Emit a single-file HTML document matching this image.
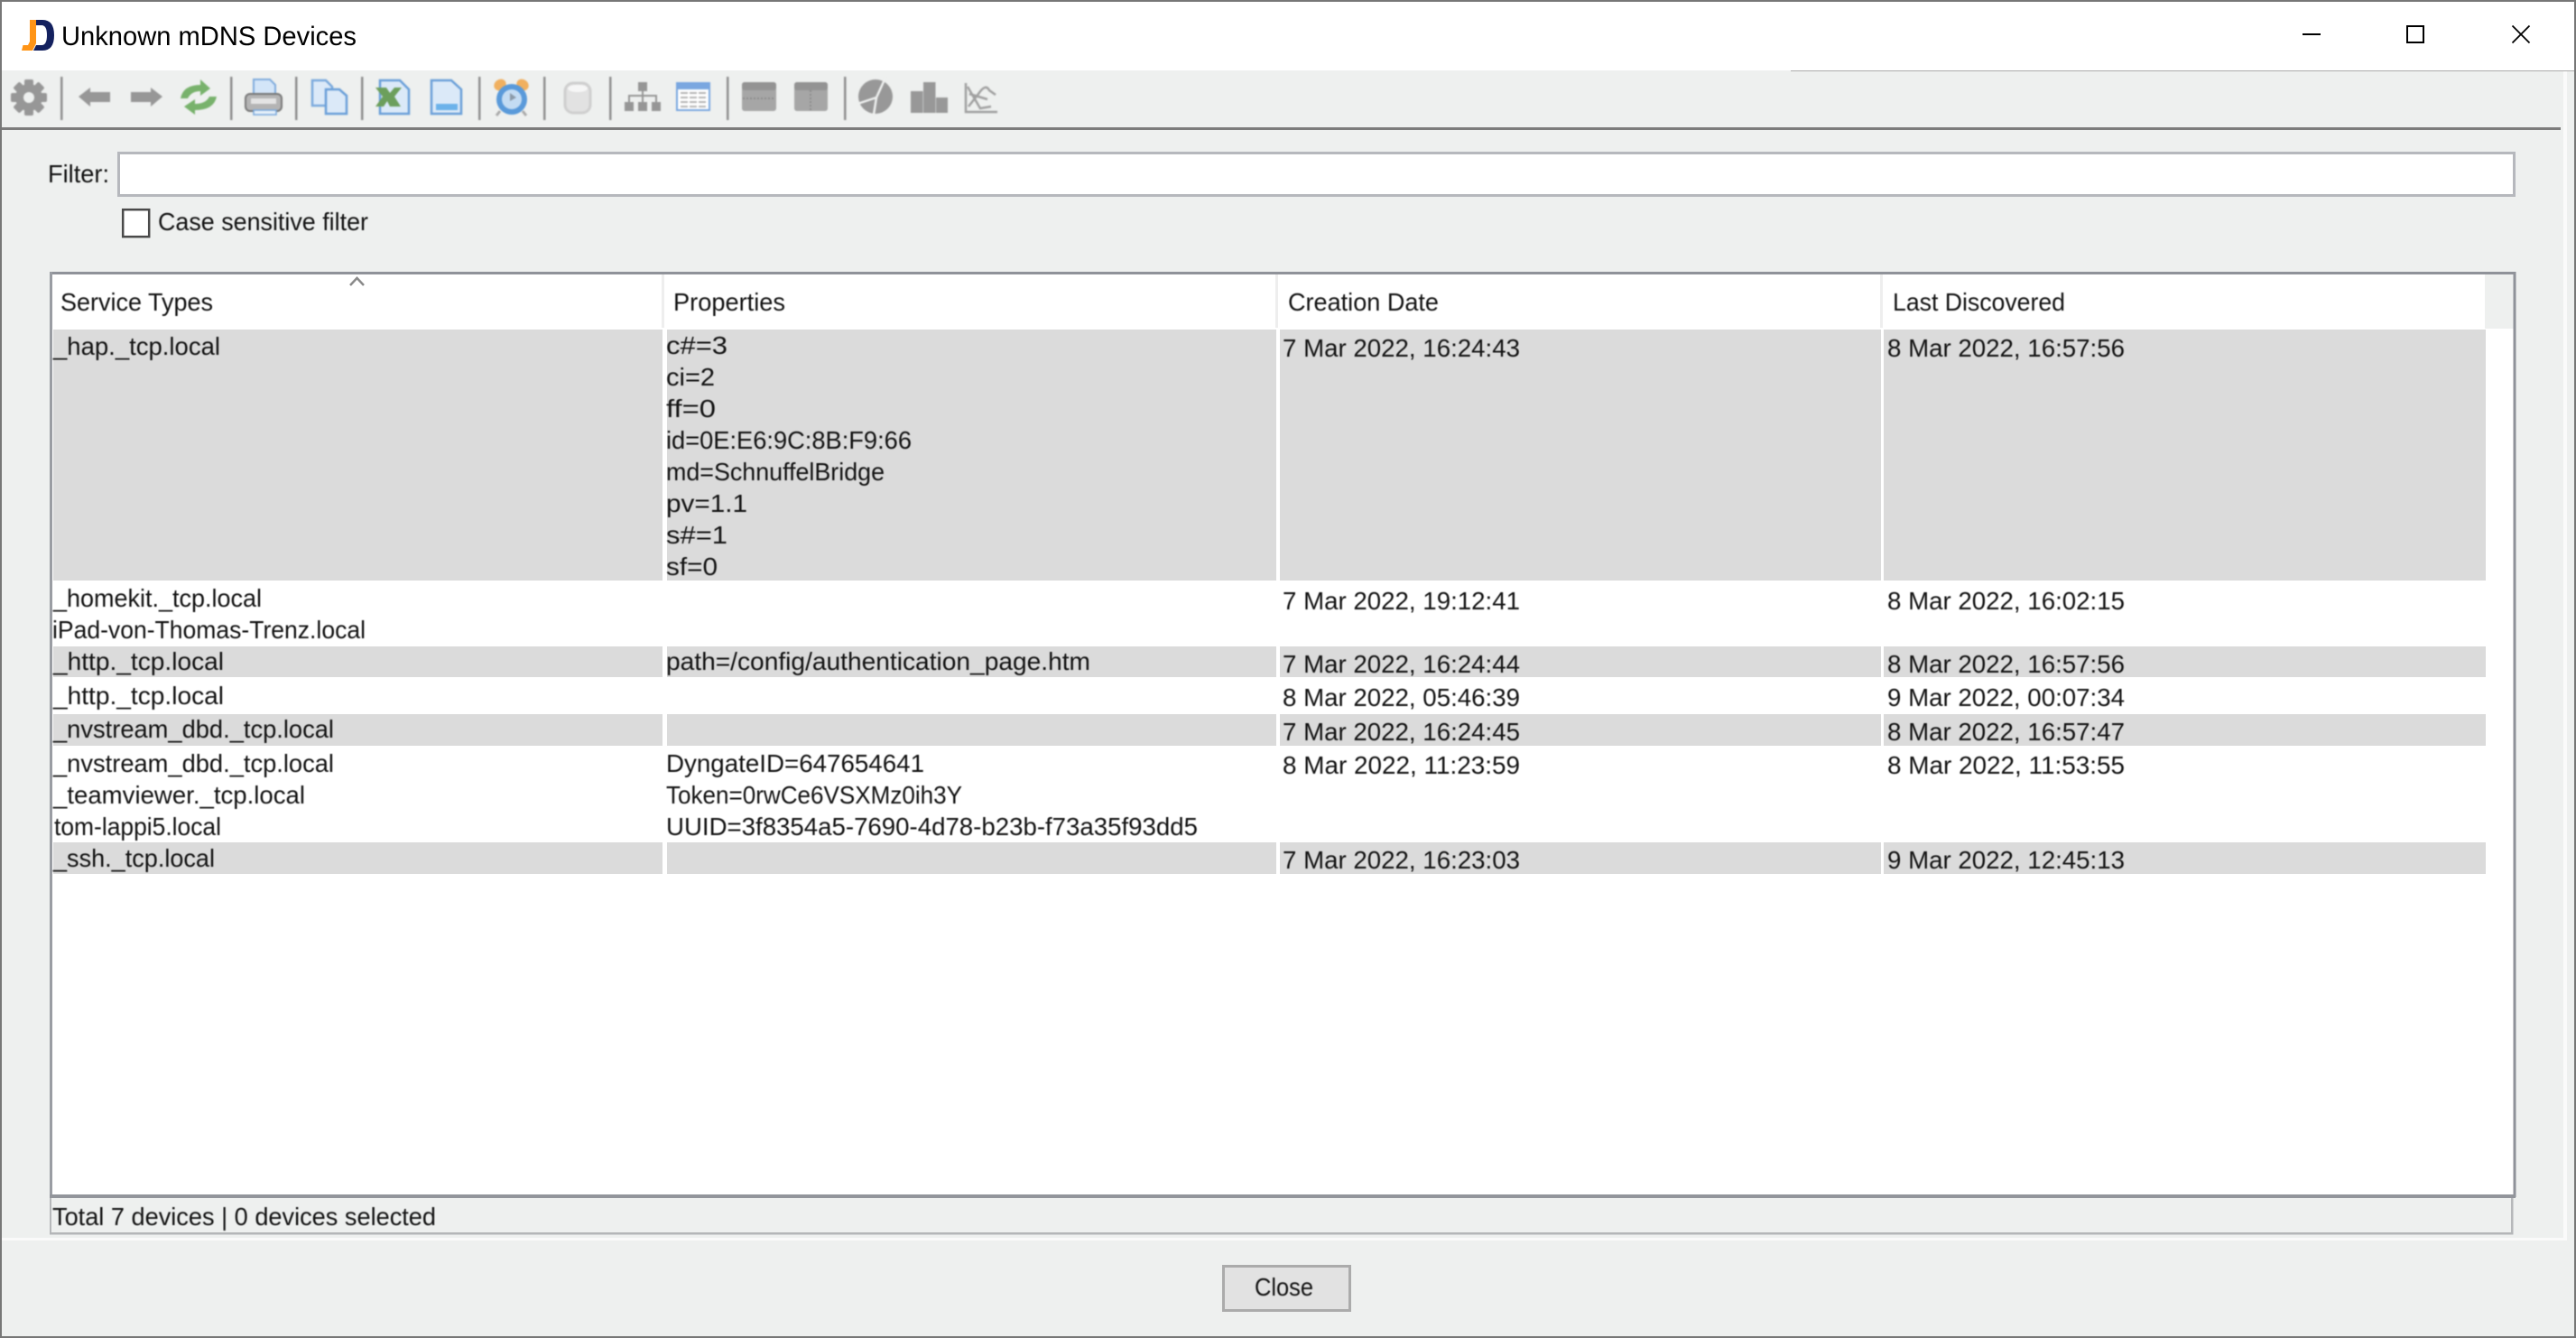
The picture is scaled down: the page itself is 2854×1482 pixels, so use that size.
<!DOCTYPE html>
<html><head><meta charset="utf-8"><title>Unknown mDNS Devices</title>
<style>
html,body{margin:0;padding:0;background:#eef0ef;width:2854px;height:1482px;overflow:hidden}
svg{display:block;position:absolute;left:0;top:0}
text{font-family:"Liberation Sans",sans-serif;font-size:27.5px;fill:#141414}
.soft{filter:blur(.6px)}
.ic{filter:blur(.9px)}
</style></head><body>
<svg width="2854" height="1482" viewBox="0 0 2854 1482" xmlns="http://www.w3.org/2000/svg">
<rect width="2854" height="1482" fill="#eef0ef"/>
<!-- title bar -->
<rect x="0" y="0" width="2854" height="78" fill="#fff"/>
<rect x="1984" y="78" width="870" height="1" fill="#ababab"/>
<path d="M33 22H40V48L36 56H24L25.500 50H31L33 46Z" fill="#ff9416"/>
<path d="M40 22H47Q60 22 60 39Q60 56 47 56H37L40 50H46Q52 50 52 39Q52 28 46 28H40Z" fill="#14215f"/>
<text x="68" y="50" style="font-size:29.5px;fill:#000" textLength="327" lengthAdjust="spacingAndGlyphs">Unknown mDNS Devices</text>
<path d="M2551 38H2571" stroke="#000" stroke-width="2"/>
<rect x="2667" y="29" width="18" height="18" fill="none" stroke="#000" stroke-width="2"/>
<path d="M2783.500 28.500L2802.500 47.500M2802.500 28.500L2783.500 47.500" stroke="#000" stroke-width="1.800"/>
<!-- light lines -->
<rect x="2840" y="79" width="4" height="1295" fill="#fafafa"/>
<rect x="2" y="1371" width="2842" height="3" fill="#fafafa"/>
<rect x="2" y="141" width="2835" height="3" fill="#7c7c7c"/>
<!-- toolbar -->
<g class="ic">
<g fill="#979797">
<circle cx="32" cy="108" r="15"/>
<rect x="27" y="88" width="10" height="40" rx="2"/>
<rect x="27" y="88" width="10" height="40" rx="2" transform="rotate(45 32 108)"/>
<rect x="27" y="88" width="10" height="40" rx="2" transform="rotate(90 32 108)"/>
<rect x="27" y="88" width="10" height="40" rx="2" transform="rotate(135 32 108)"/>
<circle cx="32" cy="108" r="6" fill="#eef0ef"/>
<path d="M87 107L100 97V102H122V113H100V118Z"/>
<path d="M180 107L167 97V102H145V113H167V118Z"/>
</g>
<g fill="#8f8f8f">
<rect x="67" y="85" width="2.500" height="48"/><rect x="255" y="85" width="2.500" height="48"/><rect x="327" y="85" width="2.500" height="48"/><rect x="400" y="85" width="2.500" height="48"/><rect x="530" y="85" width="2.500" height="48"/><rect x="602" y="85" width="2.500" height="48"/><rect x="675" y="85" width="2.500" height="48"/><rect x="805" y="85" width="2.500" height="48"/><rect x="935" y="85" width="2.500" height="48"/>
</g>
<!-- refresh -->
<path d="M200 109Q203 94 222 94V88L233 98L222 106V101Q212 101 208 109Z" fill="#78b26c"/>
<path d="M240 107Q237 122 216 122V127L204 118L216 110V115Q228 115 232 107Z" fill="#78b26c"/>
<!-- printer -->
<path d="M281 88H299L305 94V110H281Z" fill="#d3e5f8" stroke="#7fabdc" stroke-width="2"/>
<rect x="272" y="104" width="40" height="19" rx="5" fill="#b4b4b4" stroke="#777" stroke-width="2"/>
<rect x="278" y="109" width="28" height="6" fill="#e4e4e4"/>
<rect x="281" y="122" width="25" height="5" fill="#e6f0fa" stroke="#78a8dc" stroke-width="1.500"/>
<!-- copy -->
<path d="M346 89H361L368 96V117H346Z" fill="#dbe9f8" stroke="#7aa9dc" stroke-width="2.500"/>
<path d="M361 99H376L384 106V126H361Z" fill="#dbe9f8" stroke="#6a9fd8" stroke-width="2.500"/>
<!-- excel -->
<path d="M421 89H443L453 99V126H421Z" fill="#dbe9f8" stroke="#6a9fd8" stroke-width="2.500"/>
<path d="M416 97H428L432 103L437 97H445L437 107L444 118H432L429 112L425 118H416L424 107Z" fill="#6c9f5c"/>
<!-- doc -->
<path d="M478 89H500L511 99V126H478Z" fill="#dbe9f8" stroke="#6a9fd8" stroke-width="2.500"/>
<rect x="483" y="115" width="24" height="7" fill="#6cb2ea"/>
<!-- clock -->
<ellipse cx="554" cy="94" rx="7" ry="6" fill="#f0b060" transform="rotate(-35 554 94)"/>
<ellipse cx="579" cy="94" rx="7" ry="6" fill="#f0b060" transform="rotate(35 579 94)"/>
<path d="M554 123L550 128M579 123L583 128" stroke="#aaa" stroke-width="3"/>
<circle cx="567" cy="110" r="17" fill="#5a9ada"/>
<circle cx="567" cy="110" r="11" fill="#c4dcf3"/>
<path d="M565 103V112L572 108Z" fill="#8c9aa8"/>
<!-- db -->
<rect x="626" y="92" width="28" height="33" rx="9" fill="#e2e2e2" stroke="#cfcfcf" stroke-width="3"/>
<ellipse cx="640" cy="98" rx="11" ry="4" fill="#f6f6f6"/>
<!-- hierarchy -->
<g fill="#969696"><rect x="707" y="91" width="10" height="10"/><rect x="692" y="113" width="10" height="10"/><rect x="707" y="113" width="10" height="10"/><rect x="722" y="113" width="10" height="10"/></g>
<path d="M712 101V113M697 113V106H727V113" fill="none" stroke="#969696" stroke-width="2"/>
<!-- table -->
<rect x="750" y="92" width="36" height="30" fill="#fff" stroke="#7aa7e0" stroke-width="2"/>
<rect x="750" y="92" width="36" height="7" fill="#7aa7e0"/>
<path d="M754 103H782M754 108H782M754 113H782M754 118H782" stroke="#b4b4b4" stroke-width="2"/>
<path d="M763 100V121M773 100V121" stroke="#fff" stroke-width="2"/>
<!-- layouts -->
<rect x="822" y="91" width="38" height="32" rx="3" fill="#a6a6a6"/><rect x="822" y="91" width="38" height="9" rx="3" fill="#939393"/><path d="M823 109H859" stroke="#848484" stroke-width="1.500" stroke-dasharray="2 2"/>
<rect x="880" y="91" width="37" height="32" rx="3" fill="#a6a6a6"/><rect x="880" y="91" width="37" height="9" rx="3" fill="#939393"/><path d="M898 100V123" stroke="#848484" stroke-width="1.500" stroke-dasharray="2 2"/>
<!-- pie -->
<circle cx="970" cy="107" r="19" fill="#989898"/>
<path d="M981 86L971 108M971 108L950 115M971 108L968 127" stroke="#eef0ef" stroke-width="2.500" fill="none"/>
<!-- bars -->
<g fill="#989898"><rect x="1009" y="101" width="13.500" height="24"/><rect x="1023" y="91" width="13.500" height="34"/><rect x="1037" y="108" width="13" height="17"/></g>
<!-- chart -->
<path d="M1070 92V124H1105" fill="none" stroke="#a0a0a0" stroke-width="2.500"/>
<path d="M1072 96L1086 120L1098 118M1073 118L1084 104Q1092 92 1096 100L1103 105M1074 104L1094 110" fill="none" stroke="#a0a0a0" stroke-width="2.500"/>
</g>
<!-- filter -->
<rect x="131.500" y="169.500" width="2654" height="47" fill="#fff" stroke="#b6b8bd" stroke-width="3"/>
<g class="soft">
<text x="53" y="202" textLength="68" lengthAdjust="spacingAndGlyphs">Filter:</text>
<text x="175" y="255" textLength="233" lengthAdjust="spacingAndGlyphs">Case sensitive filter</text>
</g>
<rect x="136.200" y="232.200" width="29" height="30" fill="#fff" stroke="#4a4a4a" stroke-width="2.500"/>
<!-- table -->
<rect x="56" y="303" width="2730" height="1022" fill="#fff"/>
<rect x="2753" y="304" width="32" height="60" fill="#eef0ef"/>
<rect x="733" y="304" width="3" height="59" fill="#eeeeee"/>
<rect x="1413" y="304" width="3" height="59" fill="#eeeeee"/>
<rect x="2083" y="304" width="3" height="59" fill="#eeeeee"/>
<g fill="#dbdbdb">
<rect x="59" y="365" width="675" height="278"/><rect x="739" y="365" width="675" height="278"/><rect x="1418" y="365" width="666" height="278"/><rect x="2087" y="365" width="667" height="278"/>
<rect x="59" y="716" width="675" height="34"/><rect x="739" y="716" width="675" height="34"/><rect x="1418" y="716" width="666" height="34"/><rect x="2087" y="716" width="667" height="34"/>
<rect x="59" y="791" width="675" height="35"/><rect x="739" y="791" width="675" height="35"/><rect x="1418" y="791" width="666" height="35"/><rect x="2087" y="791" width="667" height="35"/>
<rect x="59" y="933" width="675" height="35"/><rect x="739" y="933" width="675" height="35"/><rect x="1418" y="933" width="666" height="35"/><rect x="2087" y="933" width="667" height="35"/>
</g>
<rect x="55" y="301" width="2732" height="3" fill="#8f9299"/>
<rect x="55" y="301" width="3" height="1025" fill="#9a9da3"/>
<rect x="2784.500" y="301" width="3" height="1025" fill="#8f9299"/>
<rect x="55" y="1323" width="2732" height="4" fill="#92959b"/>
<path d="M388 316L395.500 308L403 316" fill="none" stroke="#8a8a8a" stroke-width="2.500"/>
<!-- status -->
<rect x="55" y="1327" width="2" height="40" fill="#b6b8ba"/>
<rect x="2782" y="1327" width="2.500" height="40" fill="#b6b8ba"/>
<rect x="55" y="1365" width="2729.500" height="2.500" fill="#b4b6b8"/>
<g class="soft">
<text x="67" y="344" textLength="169" lengthAdjust="spacingAndGlyphs">Service Types</text>
<text x="746" y="344" textLength="124" lengthAdjust="spacingAndGlyphs">Properties</text>
<text x="1427" y="344" textLength="167" lengthAdjust="spacingAndGlyphs">Creation Date</text>
<text x="2097" y="344" textLength="191" lengthAdjust="spacingAndGlyphs">Last Discovered</text>

<text x="59" y="393" textLength="185" lengthAdjust="spacingAndGlyphs">_hap._tcp.local</text>
<text x="59" y="672" textLength="231" lengthAdjust="spacingAndGlyphs">_homekit._tcp.local</text>
<text x="58" y="707" textLength="347" lengthAdjust="spacingAndGlyphs">iPad-von-Thomas-Trenz.local</text>
<text x="59" y="742" textLength="189" lengthAdjust="spacingAndGlyphs">_http._tcp.local</text>
<text x="59" y="780" textLength="189" lengthAdjust="spacingAndGlyphs">_http._tcp.local</text>
<text x="59" y="817" textLength="311" lengthAdjust="spacingAndGlyphs">_nvstream_dbd._tcp.local</text>
<text x="59" y="855" textLength="311" lengthAdjust="spacingAndGlyphs">_nvstream_dbd._tcp.local</text>
<text x="59" y="890" textLength="279" lengthAdjust="spacingAndGlyphs">_teamviewer._tcp.local</text>
<text x="60" y="925" textLength="185" lengthAdjust="spacingAndGlyphs">tom-lappi5.local</text>
<text x="59" y="960" textLength="179" lengthAdjust="spacingAndGlyphs">_ssh._tcp.local</text>

<text x="738" y="392" textLength="68" lengthAdjust="spacingAndGlyphs">c#=3</text>
<text x="738" y="427" textLength="54" lengthAdjust="spacingAndGlyphs">ci=2</text>
<text x="738" y="462" textLength="55" lengthAdjust="spacingAndGlyphs">ff=0</text>
<text x="738" y="497" textLength="272" lengthAdjust="spacingAndGlyphs">id=0E:E6:9C:8B:F9:66</text>
<text x="738" y="532" textLength="242" lengthAdjust="spacingAndGlyphs">md=SchnuffelBridge</text>
<text x="738" y="567" textLength="90" lengthAdjust="spacingAndGlyphs">pv=1.1</text>
<text x="738" y="602" textLength="68" lengthAdjust="spacingAndGlyphs">s#=1</text>
<text x="738" y="637" textLength="57" lengthAdjust="spacingAndGlyphs">sf=0</text>
<text x="738" y="742" textLength="470" lengthAdjust="spacingAndGlyphs">path=/config/authentication_page.htm</text>
<text x="738" y="855" textLength="286" lengthAdjust="spacingAndGlyphs">DyngateID=647654641</text>
<text x="738" y="890" textLength="328" lengthAdjust="spacingAndGlyphs">Token=0rwCe6VSXMz0ih3Y</text>
<text x="738" y="925" textLength="589" lengthAdjust="spacingAndGlyphs">UUID=3f8354a5-7690-4d78-b23b-f73a35f93dd5</text>

<text x="1421" y="395" textLength="263" lengthAdjust="spacingAndGlyphs">7 Mar 2022, 16:24:43</text>
<text x="1421" y="675" textLength="263" lengthAdjust="spacingAndGlyphs">7 Mar 2022, 19:12:41</text>
<text x="1421" y="745" textLength="263" lengthAdjust="spacingAndGlyphs">7 Mar 2022, 16:24:44</text>
<text x="1421" y="782" textLength="263" lengthAdjust="spacingAndGlyphs">8 Mar 2022, 05:46:39</text>
<text x="1421" y="820" textLength="263" lengthAdjust="spacingAndGlyphs">7 Mar 2022, 16:24:45</text>
<text x="1421" y="857" textLength="263" lengthAdjust="spacingAndGlyphs">8 Mar 2022, 11:23:59</text>
<text x="1421" y="962" textLength="263" lengthAdjust="spacingAndGlyphs">7 Mar 2022, 16:23:03</text>

<text x="2091" y="395" textLength="263" lengthAdjust="spacingAndGlyphs">8 Mar 2022, 16:57:56</text>
<text x="2091" y="675" textLength="263" lengthAdjust="spacingAndGlyphs">8 Mar 2022, 16:02:15</text>
<text x="2091" y="745" textLength="263" lengthAdjust="spacingAndGlyphs">8 Mar 2022, 16:57:56</text>
<text x="2091" y="782" textLength="263" lengthAdjust="spacingAndGlyphs">9 Mar 2022, 00:07:34</text>
<text x="2091" y="820" textLength="263" lengthAdjust="spacingAndGlyphs">8 Mar 2022, 16:57:47</text>
<text x="2091" y="857" textLength="263" lengthAdjust="spacingAndGlyphs">8 Mar 2022, 11:53:55</text>
<text x="2091" y="962" textLength="263" lengthAdjust="spacingAndGlyphs">9 Mar 2022, 12:45:13</text>

<text x="58" y="1357" textLength="425" lengthAdjust="spacingAndGlyphs">Total 7 devices | 0 devices selected</text>
</g>
<!-- close -->
<rect x="1355.500" y="1402.500" width="140" height="49" fill="#e2e2e2" stroke="#ababab" stroke-width="3"/>
<g class="soft"><text x="1390" y="1435" textLength="65" lengthAdjust="spacingAndGlyphs">Close</text></g>
<!-- window border -->
<rect x="0" y="0" width="2854" height="2" fill="#777"/>
<rect x="0" y="1480" width="2854" height="2" fill="#777"/>
<rect x="0" y="0" width="2" height="1482" fill="#777"/>
<rect x="2852" y="0" width="2" height="1482" fill="#777"/>
</svg>
</body></html>
